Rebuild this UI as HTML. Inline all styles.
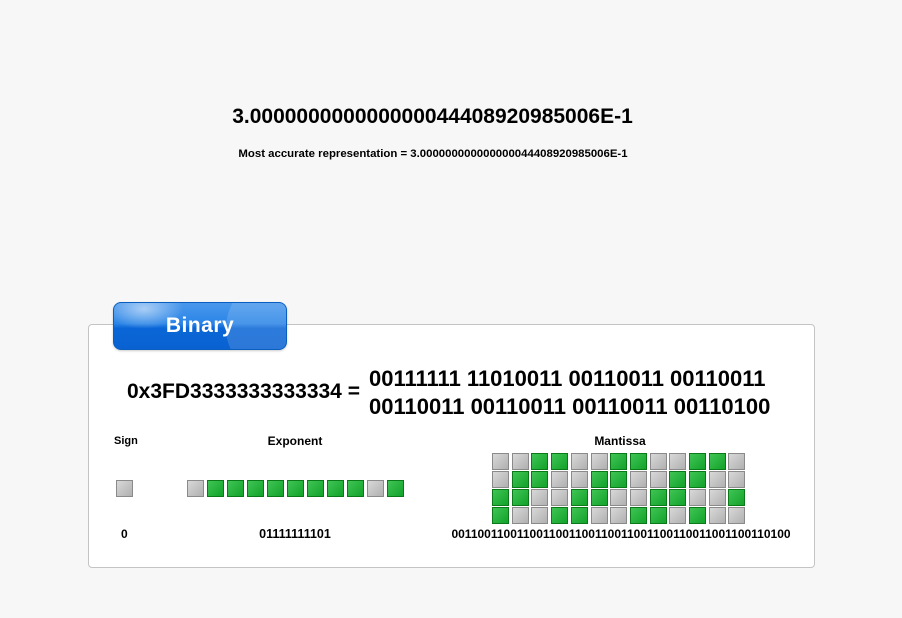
<!DOCTYPE html>
<html><head><meta charset="utf-8"><style>
body{margin:0;width:902px;height:618px;background:#f7f7f7;font-family:"Liberation Sans",sans-serif;position:relative;overflow:hidden;color:#000}
.a{position:absolute;white-space:nowrap;font-weight:bold}
.c{text-align:center}
.panel{position:absolute;left:88px;top:324px;width:725px;height:242px;background:#fff;border:1px solid #c4c4c4;border-radius:4px}
.tab{position:absolute;left:113px;top:302px;width:172px;height:46px;border-radius:8px;border:1px solid #0a5ec0;background:linear-gradient(180deg,#4a98ec 0%,#2a84e6 45%,#0a66d6 55%,#0a62d2 100%);box-shadow:0 1px 2px rgba(0,0,0,.2);overflow:hidden}
.tab:before{content:"";position:absolute;left:-10px;top:-14px;width:80px;height:40px;border-radius:50%;background:radial-gradient(rgba(255,255,255,.55),rgba(255,255,255,0) 70%)}
.tab:after{content:"";position:absolute;left:112px;top:-30px;width:120px;height:110px;border-radius:50%;background:rgba(255,255,255,.14)}
.tab span{position:absolute;left:0;right:0;top:11px;text-align:center;color:#fff;font-size:21px;font-weight:bold;letter-spacing:.5px;z-index:1}
.s{position:absolute;width:15px;height:15px;border:1px solid #8a8a8a;background:linear-gradient(135deg,#d8d8d8,#b0b0b0)}
.g{border-color:#0a7a18;background:linear-gradient(135deg,#3fc454,#12a22a)}
</style></head><body>
<div class="a c" style="left:232px;width:401px;top:105px;font-size:21px">3.000000000000000044408920985006E-1</div>
<div class="a c" style="left:233px;width:400px;top:148px;font-size:11.4px">Most accurate representation = 3.000000000000000044408920985006E-1</div>
<div class="panel"></div>
<div class="tab"><span>Binary</span></div>
<div class="a" style="left:127px;top:380px;font-size:21px">0x3FD3333333333334 =</div>
<div class="a" style="left:369px;top:365px;font-size:22px;line-height:28px">00111111 11010011 00110011 00110011<br>00110011 00110011 00110011 00110100</div>
<div class="a" style="left:114px;top:435px;font-size:11px">Sign</div>
<div class="a c" style="left:245px;width:100px;top:434px;font-size:12px">Exponent</div>
<div class="a c" style="left:570px;width:100px;top:434px;font-size:12px">Mantissa</div>
<div class="a" style="left:121px;top:527px;font-size:12px">0</div>
<div class="a c" style="left:245px;width:100px;top:527px;font-size:12.5px">01111111101</div>
<div class="a c" style="left:421px;width:400px;top:527px;font-size:12px">0011001100110011001100110011001100110011001100110100</div>
<div id="sq"></div>
<script>
var h='';
function sq(x,y,b){h+='<div class="s'+(b=='1'?' g':'')+'" style="left:'+x+'px;top:'+y+'px"></div>';}
sq(116,480,'0');
var e='01111111101';for(var i=0;i<11;i++)sq(187+i*20,480,e[i]);
var m='0011001100110011001100110011001100110011001100110100';
for(var r=0;r<4;r++)for(var c=0;c<13;c++)sq(Math.round(492+c*19.7),453+r*18,m[r*13+c]);
document.getElementById('sq').innerHTML=h;
</script>
</body></html>
